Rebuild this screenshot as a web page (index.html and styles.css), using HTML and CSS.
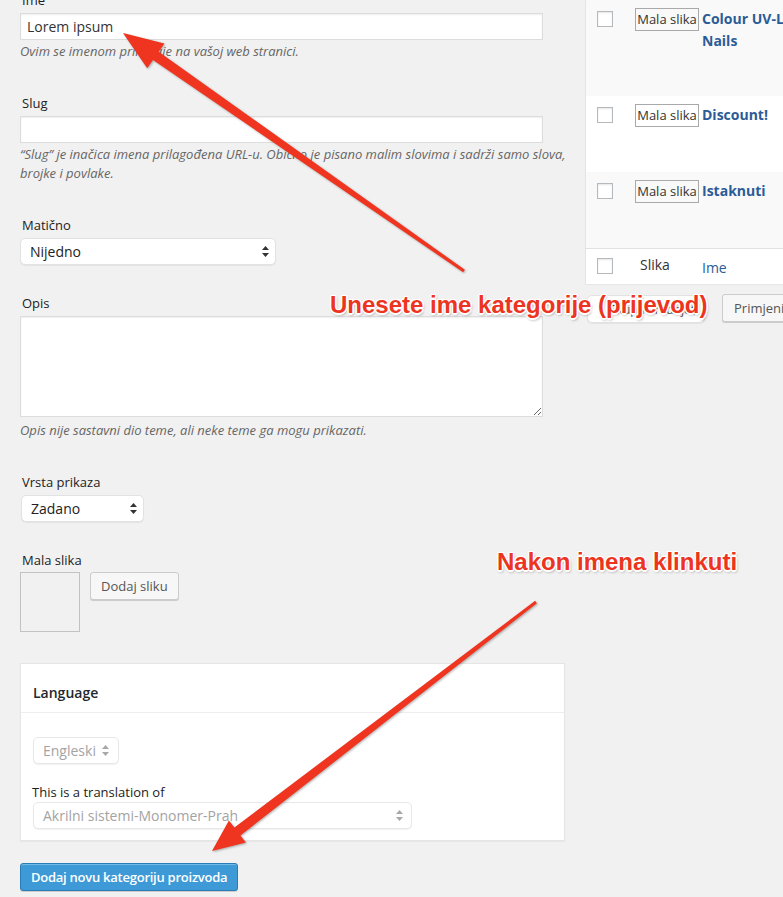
FILE: index.html
```html
<!DOCTYPE html>
<html lang="hr">
<head>
<meta charset="utf-8">
<title>Dodaj kategoriju proizvoda</title>
<link rel="stylesheet" href="styles.css">
</head>
<body>
<div class="page">
  <div class="form-col">
    <div class="field">
      <label class="lbl">Ime</label>
      <input class="text-input" type="text" value="Lorem ipsum">
      <p class="desc">Ovim se imenom prikazuje na vašoj web stranici.</p>
    </div>
    <div class="field">
      <label class="lbl">Slug</label>
      <input class="text-input" type="text" value="">
      <p class="desc">“Slug” je inačica imena prilagođena URL-u. Obično je pisano malim slovima i sadrži samo slova, brojke i povlake.</p>
    </div>
    <div class="field">
      <label class="lbl">Matično</label>
      <div class="select sel-parent"><span>Nijedno</span><svg class="arr" width="7" height="11" viewBox="0 0 7 11"><path d="M3.5 0L7 4H0Z M0 7H7L3.5 11Z"/></svg></div>
    </div>
    <div class="field">
      <label class="lbl">Opis</label>
      <textarea class="textarea"></textarea>
      <p class="desc desc-ta">Opis nije sastavni dio teme, ali neke teme ga mogu prikazati.</p>
    </div>
    <div class="field">
      <label class="lbl">Vrsta prikaza</label>
      <div class="select sel-display"><span>Zadano</span><svg class="arr" width="7" height="11" viewBox="0 0 7 11"><path d="M3.5 0L7 4H0Z M0 7H7L3.5 11Z"/></svg></div>
    </div>
    <div class="field field-thumb">
      <label class="lbl lbl-thumb">Mala slika</label>
      <div class="thumb-row">
        <div class="thumb-box"></div>
        <button class="btn" type="button">Dodaj sliku</button>
      </div>
    </div>
    <div class="lang-box">
      <h3 class="lang-head">Language</h3>
      <div class="lang-body">
        <div class="select disabled sel-lang"><span>Engleski</span><svg class="arr" width="7" height="11" viewBox="0 0 7 11"><path d="M3.5 0L7 4H0Z M0 7H7L3.5 11Z"/></svg></div>
        <label class="lbl tr-label">This is a translation of</label>
        <div class="select disabled sel-trans"><span>Akrilni sistemi-Monomer-Prah</span><svg class="arr" width="7" height="11" viewBox="0 0 7 11"><path d="M3.5 0L7 4H0Z M0 7H7L3.5 11Z"/></svg></div>
      </div>
    </div>
    <button class="btn-primary" type="button">Dodaj novu kategoriju proizvoda</button>
  </div>

  <div class="list-col">
    <div class="table">
      <div class="row row-tall alt">
        <div class="c-cb"><span class="cb"></span></div>
        <div class="c-thumb"><span class="thumb">Mala slika</span></div>
        <div class="c-name"><span class="name">Colour UV-LED Nails</span></div>
      </div>
      <div class="row">
        <div class="c-cb"><span class="cb"></span></div>
        <div class="c-thumb"><span class="thumb">Mala slika</span></div>
        <div class="c-name"><span class="name">Discount!</span></div>
      </div>
      <div class="row alt">
        <div class="c-cb"><span class="cb"></span></div>
        <div class="c-thumb"><span class="thumb">Mala slika</span></div>
        <div class="c-name"><span class="name">Istaknuti</span></div>
      </div>
      <div class="row row-foot">
        <div class="c-cb"><span class="cb"></span></div>
        <div class="c-thumb"><span class="col-title">Slika</span></div>
        <div class="c-name"><span class="col-link">Ime</span></div>
      </div>
    </div>
    <div class="bulk">
      <div class="select sel-bulk"><span>Skupne radnje</span><svg class="arr" width="7" height="11" viewBox="0 0 7 11"><path d="M3.5 0L7 4H0Z M0 7H7L3.5 11Z"/></svg></div>
      <button class="btn btn-apply" type="button">Primjeni</button>
    </div>
  </div>
</div>

<div class="overlay">
  <svg class="arrows" width="783" height="897" viewBox="0 0 783 897">
    <polygon points="123,33 164.4,43.6 158.7,51.8 464.9,269.8 463.1,272.2 153,60 147.2,68.2"/>
    <polygon points="212,851 228.9,820.4 234.4,827.5 535.1,600.8 536.9,603.2 240.4,835.5 245.9,842.6"/>
  </svg>
  <div class="note note-1">Unesete ime kategorije (prijevod)</div>
  <div class="note note-2">Nakon imena klinkuti</div>
</div>
</body>
</html>
```

FILE: styles.css
```css
html, body {
  margin: 0;
  padding: 0;
}

body {
  position: relative;
  width: 783px;
  height: 897px;
  overflow: hidden;
  background: #f1f1f1;
  font-family: "Open Sans", "DejaVu Sans", sans-serif;
  color: #444;
}

.page {
  display: flex;
  align-items: flex-start;
  gap: 15px;
  padding-left: 20px;
}

/* ---------- form column ---------- */
.form-col {
  flex: none;
  width: 550px;
  margin-top: -9px;
}

.field {
  display: flow-root;
  margin-bottom: 29px;
}

.field-thumb {
  margin-bottom: 31px;
}

.lbl {
  display: block;
  padding-left: 2px;
  font-size: 13px;
  line-height: 18px;
  color: #222;
  margin-bottom: 4px;
}

.lbl-thumb {
  margin-bottom: 3px;
}

.text-input {
  display: block;
  box-sizing: border-box;
  width: 95%;
  height: 27px;
  margin: 0;
  padding: 2px 6px;
  border: 1px solid #dcdcdc;
  border-radius: 0;
  background: #fff;
  box-shadow: inset 0 1px 2px rgba(0, 0, 0, 0.07);
  font-family: "Open Sans", sans-serif;
  font-size: 14px;
  color: #333;
  outline: none;
}

.textarea {
  display: block;
  box-sizing: border-box;
  width: 95%;
  height: 101px;
  margin: 0;
  padding: 4px 6px;
  border: 1px solid #dcdcdc;
  border-radius: 0;
  background: #fff;
  box-shadow: inset 0 1px 2px rgba(0, 0, 0, 0.07);
  font-family: "Open Sans", sans-serif;
  font-size: 14px;
  outline: none;
}

.desc {
  width: 555px;
  margin: 2px 0 4px;
  font-size: 13px;
  line-height: 19px;
  font-style: italic;
  color: #666;
}

.desc-ta {
  margin-top: 4px;
}

/* fake selects (mac style) */
.select {
  box-sizing: border-box;
  display: flex;
  align-items: center;
  justify-content: space-between;
  height: 27px;
  padding: 0 6px 0 9px;
  background: #fff;
  border: 1px solid #e2e2e2;
  border-radius: 5px;
  box-shadow: 0 1px 1px rgba(0, 0, 0, 0.06);
  font-size: 14px;
  color: #222;
  white-space: nowrap;
  overflow: hidden;
}

.select .arr {
  flex: none;
  fill: #333;
}

.select.disabled {
  color: #a3a3a3;
  border-color: #e8e8e8;
}

.select.disabled .arr {
  fill: #a8a8a8;
}

.sel-parent {
  width: 256px;
}

.sel-display {
  width: 123px;
  margin-left: 1px;
}

.sel-lang {
  width: 86px;
  padding-right: 9px;
}

.sel-trans {
  width: 379px;
  padding-right: 8px;
}

.thumb-row {
  display: flex;
  align-items: flex-start;
  gap: 10px;
}

.thumb-box {
  box-sizing: border-box;
  width: 60px;
  height: 60px;
  border: 1px solid #c2c2c2;
  background: #f1f1f1;
}

.btn {
  box-sizing: border-box;
  height: 28px;
  margin: 0;
  padding: 0 10px;
  background: #f7f7f7;
  border: 1px solid #cccccc;
  border-radius: 3px;
  box-shadow: 0 1px 0 #cccccc;
  font-family: "Open Sans", sans-serif;
  font-size: 13px;
  color: #555;
  cursor: pointer;
}

.lang-box {
  box-sizing: border-box;
  width: 545px;
  background: #fff;
  border: 1px solid #e5e5e5;
  box-shadow: 0 1px 1px rgba(0, 0, 0, 0.04);
}

.lang-head {
  margin: 0;
  padding: 19px 12px 9px;
  font-size: 14px;
  line-height: 20px;
  font-weight: 600;
  color: #23282d;
  border-bottom: 1px solid #eeeeee;
}

.lang-body {
  padding: 24px 11px 11px;
}

.lang-body .select {
  margin-left: 1px;
}

.tr-label {
  padding-left: 0;
  margin: 19px 0 1px;
}

.btn-primary {
  box-sizing: border-box;
  display: block;
  height: 28px;
  margin: 22px 0 0;
  padding: 0 10px;
  background: #3d9ad6;
  border: 1px solid #2a7cb6;
  border-radius: 3px;
  box-shadow: inset 0 1px 0 rgba(150, 210, 240, 0.6), 0 1px 0 rgba(0, 0, 0, 0.15);
  font-family: "Open Sans", sans-serif;
  font-size: 13px;
  font-weight: 600;
  letter-spacing: -0.25px;
  color: #fff;
  cursor: pointer;
}

/* ---------- list column ---------- */
.list-col {
  flex: none;
  width: 400px;
}

.table {
  background: #fff;
  border-left: 1px solid #e5e5e5;
  box-shadow: 0 1px 1px rgba(0, 0, 0, 0.04);
}

.row {
  display: flex;
  height: 76px;
  box-sizing: border-box;
}

.row-tall {
  height: 96px;
}

.row.alt {
  background: #f9f9f9;
}

.row-foot {
  height: 36px;
  border-top: 1px solid #e1e1e1;
  background: #fff;
}

.c-cb {
  flex: none;
  box-sizing: border-box;
  width: 49px;
  padding: 11px 0 0 11px;
}

.row-foot .c-cb {
  padding-top: 9px;
}

.cb {
  display: block;
  box-sizing: border-box;
  width: 16px;
  height: 16px;
  background: #fff;
  border: 1px solid #b4b9be;
  box-shadow: inset 0 1px 2px rgba(0, 0, 0, 0.1);
}

.c-thumb {
  flex: none;
  width: 67px;
  padding-top: 8px;
}

.thumb {
  display: inline-block;
  box-sizing: border-box;
  height: 23px;
  width: 64px;
  border: 1px solid #a9a9a9;
  font-size: 13px;
  line-height: 21px;
  text-align: center;
  color: #333;
  white-space: nowrap;
  overflow: hidden;
}

.c-name {
  flex: none;
  width: 118px;
  padding-top: 7px;
}

.name {
  font-size: 14px;
  line-height: 20px;
  font-weight: 700;
  color: #2b5c97;
}

.row-foot .c-thumb,
.row-foot .c-name {
  padding-top: 7px;
}

.col-title {
  display: block;
  padding-left: 5px;
  font-size: 14px;
  line-height: 18px;
  color: #333;
}

.col-link {
  font-size: 14px;
  line-height: 18px;
  color: #2b5c97;
}

.bulk {
  display: flex;
  align-items: flex-start;
  margin-top: 10px;
  padding-left: 2px;
}

.sel-bulk {
  width: 118px;
  height: 28px;
  margin-top: 1px;
  padding-left: 22px;
  font-size: 12px;
  color: #555;
}

.btn-apply {
  margin-left: 17px;
  padding: 0 11px;
  white-space: nowrap;
}

/* ---------- annotation overlay ---------- */
.overlay {
  position: absolute;
  left: 0;
  top: 0;
  width: 783px;
  height: 897px;
  pointer-events: none;
}

.arrows {
  position: absolute;
  left: 0;
  top: 0;
  fill: #ef341f;
  filter: drop-shadow(1px 1px 1px rgba(0, 0, 0, 0.3));
}

.note {
  position: absolute;
  font-family: "Liberation Sans", Arial, sans-serif;
  font-weight: 700;
  font-size: 24px;
  line-height: 24px;
  color: #ec3420;
  white-space: nowrap;
  text-shadow:
    -1px -1px 0 #fff, 1px -1px 0 #fff, -1px 1px 0 #fff, 1px 1px 0 #fff,
    0 -1.5px 0 #fff, 0 1.5px 0 #fff, -1.5px 0 0 #fff, 1.5px 0 0 #fff,
    1px 2px 3px rgba(0, 0, 0, 0.4);
}

.note-1 {
  left: 330px;
  top: 293px;
}

.note-2 {
  left: 497px;
  top: 550px;
}
```
